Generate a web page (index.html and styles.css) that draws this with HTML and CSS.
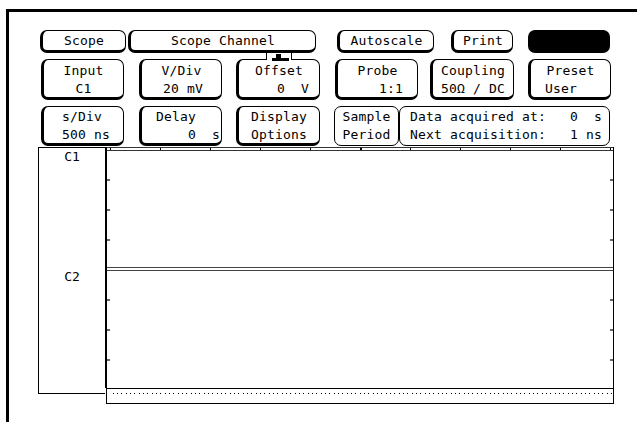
FILE: index.html
```html
<!DOCTYPE html>
<html lang="en">
<head>
    <meta charset="UTF-8">
    <title>Scope Channel</title>
    <link rel="stylesheet" href="styles.css">
</head>
<body>
    <div class="screen">
        <div class="row row-top">
            <div class="btn k-scope">Scope</div>
            <div class="btn k-channel">Scope Channel</div>
            <div class="btn k-auto">Autoscale</div>
            <div class="btn k-print">Print</div>
            <div class="btn k-run"></div>
        </div>

        <div class="row row-mid">
            <div class="btn k-input"><div>Input</div><div>C1</div></div>
            <div class="btn k-vdiv"><div>V/Div</div><div class="val">20 mV</div></div>
            <div class="btn k-offset">
                <svg class="link" width="30" height="12" viewBox="0 0 30 12">
                    <rect x="2.5" y="3" width="25" height="9" fill="#fff"/>
                    <line x1="2.5" y1="2" x2="2.5" y2="10" stroke="#000" stroke-width="1"/>
                    <line x1="27.5" y1="2" x2="27.5" y2="10" stroke="#000" stroke-width="1"/>
                    <rect x="12" y="4" width="5" height="4" fill="#000"/>
                    <rect x="8" y="8" width="17" height="3" fill="#000"/>
                </svg>
                <div>Offset</div>
                <div class="val">0  V</div>
            </div>
            <div class="btn k-probe"><div>Probe</div><div class="val">1:1</div></div>
            <div class="btn k-coupling"><div>Coupling</div><div>50Ω / DC</div></div>
            <div class="btn k-preset"><div>Preset</div><div class="val">User</div></div>
        </div>

        <div class="row row-bot">
            <div class="btn k-sdiv"><div class="val">s/Div</div><div class="val">500 ns</div></div>
            <div class="btn k-delay"><div class="val first">Delay</div><div class="val">0  s</div></div>
            <div class="btn k-display"><div>Display</div><div>Options</div></div>
            <div class="field k-sample"><div>Sample</div><div>Period</div></div>
            <div class="field k-data"><div>Data acquired at:   0  s</div><div>Next acquisition:   1 ns</div></div>
        </div>

        <div class="display">
            <div class="labels">
                <div class="label lab-c1">C1</div>
                <div class="label lab-c2">C2</div>
            </div>
            <div class="plot">
                <div class="traces">
                    <div class="scale"></div>
                    <div class="chan"></div>
                    <div class="sep"></div>
                    <div class="chan chan-2"></div>
                </div>
                <div class="strip"><div class="dots"></div></div>
            </div>
        </div>
    </div>
</body>
</html>
```

FILE: styles.css
```css
* {
    box-sizing: border-box;
}
body {
    margin: 0;
    background-color: #fff;
    color: #000;
    font-family: "DejaVu Sans Mono", monospace;
    font-size: 13px;
}
.screen {
    margin: 9px 0 0 6px;
    height: 413px;
    border-top: 3px solid #000;
    border-left: 3px solid #000;
}

/* soft keys */
.row {
    display: flex;
}
.row-top {
    margin-top: 18px;
    height: 23px;
}
.row-mid {
    margin-top: 6px;
    height: 41px;
}
.row-bot {
    margin-top: 6px;
    height: 40px;
}
.btn,
.field {
    position: relative;
    border: 1px solid #000;
    border-radius: 7px;
    text-align: center;
    letter-spacing: 0.17px;
    line-height: 18px;
}
.btn > div,
.field > div {
    white-space: pre;
}
.btn {
    border-width: 1px 1px 3px 3px;
}
.row-top .btn {
    line-height: 19px;
}
.row-mid .btn {
    padding-top: 2px;
}
.row-bot .btn,
.row-bot .field {
    padding-top: 1px;
}
.val {
    text-align: left;
}

.k-scope { margin-left: 31px; width: 86px; }
.k-channel { margin-left: 2px; width: 188px; }
.k-auto { margin-left: 21px; width: 97px; }
.k-print { margin-left: 17px; width: 62px; }
.k-run { margin-left: 15px; width: 82px; background-color: #000; }

.k-input { margin-left: 32px; width: 83px; }
.k-vdiv { margin-left: 15px; width: 83px; }
.k-offset { margin-left: 14px; width: 84px; }
.k-probe { margin-left: 15px; width: 83px; }
.k-coupling { margin-left: 12px; width: 84px; }
.k-preset { margin-left: 14px; width: 83px; }

.k-sdiv { margin-left: 32px; width: 83px; }
.k-delay { margin-left: 15px; width: 83px; }
.k-display { margin-left: 14px; width: 84px; }
.k-sample { margin-left: 14px; width: 65px; }
.k-data { width: 211px; text-align: left; padding-left: 10px; }

.k-vdiv .val { padding-left: 21px; }
.k-offset .val { padding-left: 38px; }
.k-probe .val { padding-left: 41px; }
.k-preset .val { padding-left: 14px; }
.k-sdiv .val { padding-left: 18px; }
.k-delay .val { padding-left: 46px; }
.k-delay .val.first { padding-left: 14px; }

.link {
    position: absolute;
    left: 25px;
    top: -10px;
}

/* waveform area */
.display {
    display: flex;
    margin-top: 1px;
    margin-left: 29px;
}
.labels {
    width: 67px;
    height: 247px;
    border: 1px solid #000;
    border-right: none;
}
.label {
    text-align: center;
    line-height: 13px;
}
.lab-c1 {
    height: 119px;
    padding-top: 2px;
}
.lab-c2 {
    padding-top: 3px;
}
.plot {
    width: 509px;
}
.traces {
    height: 241px;
    border-left: 2px solid #000;
    border-right: 1px solid #000;
}
.scale {
    height: 4px;
    border-top: 1px solid #333;
    border-bottom: 1px solid #333;
    background:
        linear-gradient(#000, #000) 253px 0 / 2px 2px no-repeat,
        repeating-linear-gradient(90deg, #000 0 1px, transparent 1px 50px) 3px 0 / 100% 2px no-repeat;
}
.chan {
    height: 116px;
    background:
        repeating-linear-gradient(transparent 0 28px, #666 28px 30px) left top / 3px 90px no-repeat,
        repeating-linear-gradient(transparent 0 28px, #666 28px 30px) right top / 3px 90px no-repeat;
}
.chan-2 {
    height: 117px;
}
.sep {
    height: 4px;
    border-top: 1px solid #444;
    border-bottom: 1px solid #444;
}
.strip {
    height: 16px;
    margin-left: 1px;
    border: 1px solid #000;
    padding-top: 4px;
}
.dots {
    height: 1px;
    margin-left: 6px;
    background: repeating-linear-gradient(90deg,
        #000 0 1px, transparent 1px 4px,
        #000 4px 5px, transparent 5px 8px,
        #000 8px 9px, transparent 9px 13px);
}
```
